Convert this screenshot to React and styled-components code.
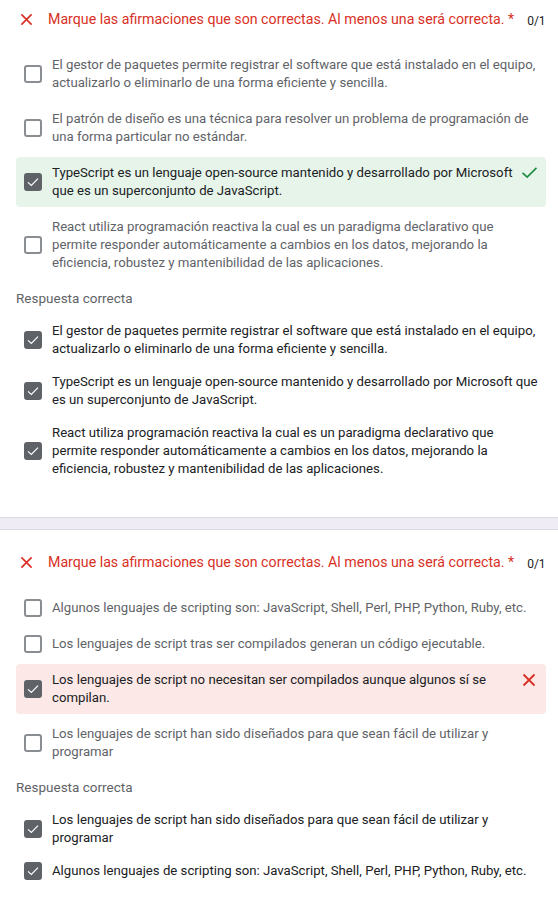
import React from 'react';
import styled, { createGlobalStyle } from 'styled-components';

const GlobalStyle = createGlobalStyle`
  body {
    margin: 0;
    background: #ffffff;
    font-family: Roboto, "Liberation Sans", Arial, sans-serif;
  }
`;

const Page = styled.div`
  width: 558px;
  background: #ffffff;
`;

const Card = styled.div`
  padding: ${p => (p.$first ? '8px' : '21px')} 12px 32px 16px;
  background: #ffffff;
`;

const Divider = styled.div`
  height: 11px;
  background: #efecf6;
  border-top: 1px solid #dcdae3;
  border-bottom: 1px solid #dcdae3;
`;

const TitleRow = styled.div`
  display: flex;
  align-items: center;
  height: 22px;
  margin-bottom: 19px;
`;

const TitleIcon = styled.div`
  flex: none;
  width: 32px;
  display: flex;
  align-items: center;
  padding-left: 4px;
  box-sizing: border-box;
`;

const TitleText = styled.div`
  color: #d93025;
  font-size: 14.2px;
  white-space: nowrap;
`;

const Points = styled.span`
  color: #202124;
  font-size: 12px;
  margin-left: 13px;
  position: relative;
  top: 2px;
  white-space: nowrap;
`;

const Options = styled.div`
  display: flex;
  flex-direction: column;
  gap: ${p => p.$gap}px;
`;

const Row = styled.div`
  display: flex;
  align-items: center;
  padding: 7px 8px;
  border-radius: 4px;
  background: ${p =>
    p.$state === 'correct' ? '#e6f4ea' : p.$state === 'wrong' ? '#fce8e6' : 'transparent'};
`;

const Box = styled.div`
  flex: none;
  width: 18px;
  height: 18px;
  box-sizing: border-box;
  border-radius: 3px;
  border: 2px solid ${p => (p.$checked ? '#5f6368' : '#8a8d91')};
  background: ${p => (p.$checked ? '#5f6368' : '#ffffff')};
  display: flex;
  align-items: center;
  justify-content: center;
  margin-right: 10px;
`;

const Label = styled.div`
  flex: 1;
  font-size: 13.2px;
  line-height: 18px;
  color: ${p => (p.$dark ? '#202124' : '#5f6368')};
`;

const Mark = styled.div`
  flex: none;
  width: 22px;
  display: flex;
  justify-content: flex-end;
  align-self: flex-start;
  padding-top: 2px;
  padding-right: ${p => p.$right}px;
  box-sizing: border-box;
`;

const Section = styled.div`
  color: #5f6368;
  font-size: 13.5px;
  font-weight: 400;
  line-height: 18px;
  margin: ${p => p.$top}px 0 ${p => p.$bottom}px;
`;

const Cross = ({ size = 13 }) => (
  <svg width={size} height={size} viewBox="0 0 14 14">
    <path d="M1.5 1.5 L12.5 12.5 M12.5 1.5 L1.5 12.5" stroke="#d93025" strokeWidth="1.8" fill="none" />
  </svg>
);

const Tick = ({ color = '#1e8e3e', w = 17, h = 13 }) => (
  <svg width={w} height={h} viewBox="0 0 18 14">
    <path d="M1.5 7.5 L6.5 12 L16.5 2" stroke={color} strokeWidth="1.8" fill="none" />
  </svg>
);

const Option = ({ text, checked, state }) => (
  <Row $state={state}>
    <Box $checked={checked}>{checked && <Tick color="#ffffff" w={12} h={10} />}</Box>
    <Label $dark={checked}>{text}</Label>
    {state === 'correct' && (
      <Mark $right={0}>
        <Tick />
      </Mark>
    )}
    {state === 'wrong' && (
      <Mark $right={2}>
        <Cross size={14} />
      </Mark>
    )}
  </Row>
);

const questions = [
  {
    options: [
      { text: 'El gestor de paquetes permite registrar el software que está instalado en el equipo, actualizarlo o eliminarlo de una forma eficiente y sencilla.' },
      { text: 'El patrón de diseño es una técnica para resolver un problema de programación de una forma particular no estándar.' },
      { text: 'TypeScript es un lenguaje open-source mantenido y desarrollado por Microsoft que es un superconjunto de JavaScript.', checked: true, state: 'correct' },
      { text: 'React utiliza programación reactiva la cual es un paradigma declarativo que permite responder automáticamente a cambios en los datos, mejorando la eficiencia, robustez y mantenibilidad de las aplicaciones.' },
    ],
    answers: [
      'El gestor de paquetes permite registrar el software que está instalado en el equipo, actualizarlo o eliminarlo de una forma eficiente y sencilla.',
      'TypeScript es un lenguaje open-source mantenido y desarrollado por Microsoft que es un superconjunto de JavaScript.',
      'React utiliza programación reactiva la cual es un paradigma declarativo que permite responder automáticamente a cambios en los datos, mejorando la eficiencia, robustez y mantenibilidad de las aplicaciones.',
    ],
  },
  {
    options: [
      { text: 'Algunos lenguajes de scripting son: JavaScript, Shell, Perl, PHP, Python, Ruby, etc.' },
      { text: 'Los lenguajes de script tras ser compilados generan un código ejecutable.' },
      { text: 'Los lenguajes de script no necesitan ser compilados aunque algunos sí se compilan.', checked: true, state: 'wrong' },
      { text: 'Los lenguajes de script han sido diseñados para que sean fácil de utilizar y programar' },
    ],
    answers: [
      'Los lenguajes de script han sido diseñados para que sean fácil de utilizar y programar',
      'Algunos lenguajes de scripting son: JavaScript, Shell, Perl, PHP, Python, Ruby, etc.',
    ],
  },
];

const Question = ({ data, first }) => (
  <Card $first={first}>
    <TitleRow>
      <TitleIcon>
        <Cross />
      </TitleIcon>
      <TitleText>Marque las afirmaciones que son correctas. Al menos una será correcta. *</TitleText>
      <Points>0/1</Points>
    </TitleRow>
    <Options $gap={4}>
      {data.options.map(o => (
        <Option key={o.text} {...o} />
      ))}
    </Options>
    <Section $top={10} $bottom={8}>Respuesta correcta</Section>
    <Options $gap={1}>
      {data.answers.map(a => (
        <Option key={a} text={a} checked />
      ))}
    </Options>
  </Card>
);

const App = () => (
  <Page>
    <GlobalStyle />
    <Question data={questions[0]} first />
    <Divider />
    <Question data={questions[1]} />
  </Page>
);

export default App;
